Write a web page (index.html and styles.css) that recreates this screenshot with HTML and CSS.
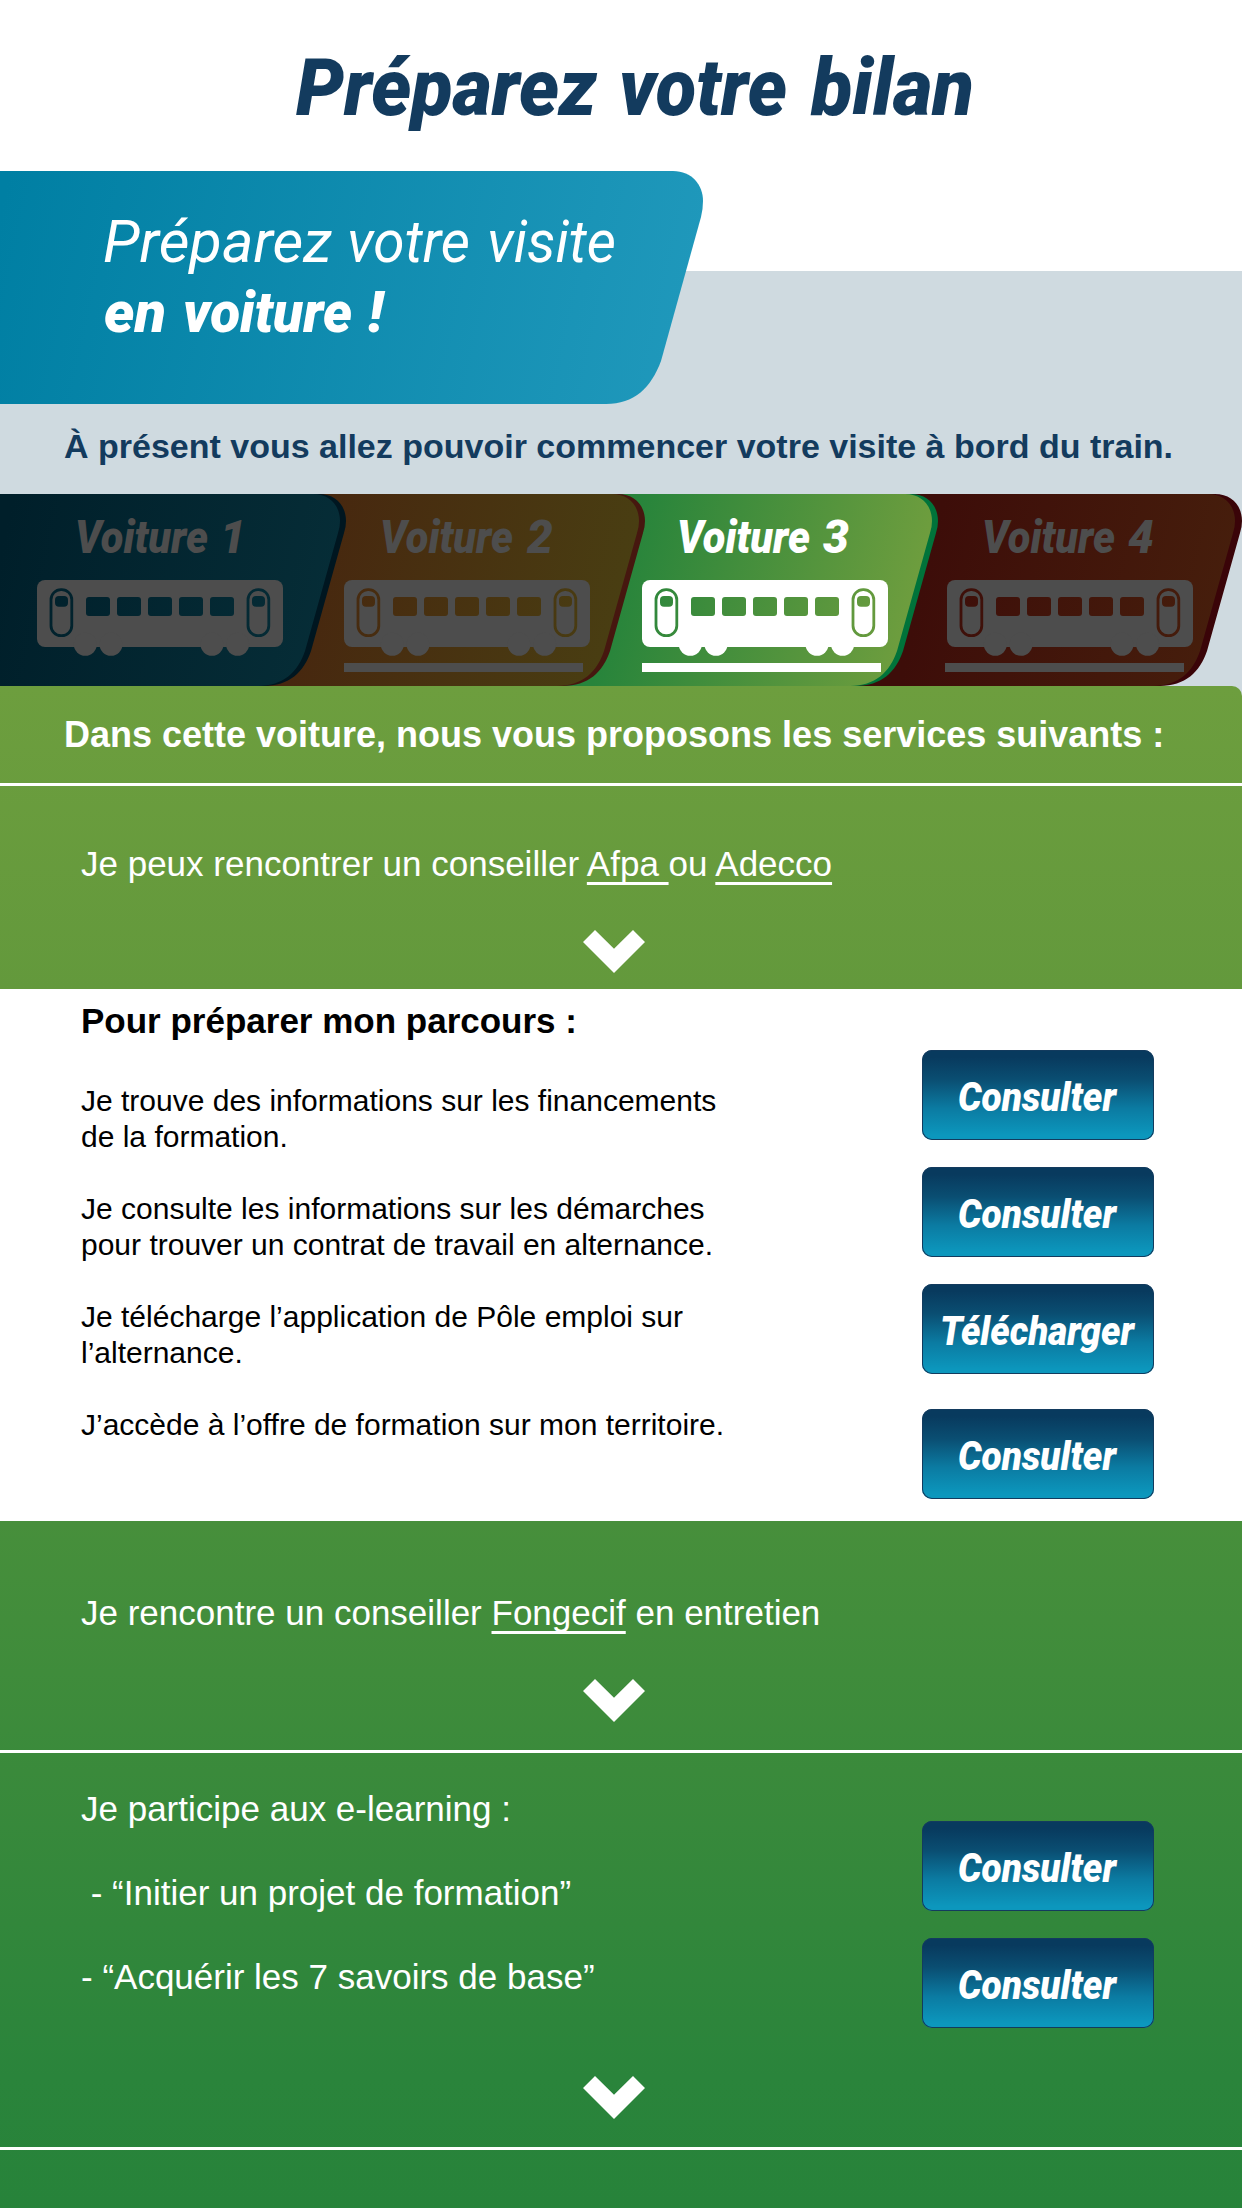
FILE: index.html
```html
<!DOCTYPE html>
<html lang="fr">
<head>
<meta charset="utf-8">
<title>Préparez votre bilan</title>
<link rel="stylesheet" href="styles.css">
</head>
<body>
<svg width="0" height="0" class="defs" aria-hidden="true">
  <defs>
    <mask id="openings" maskUnits="userSpaceOnUse" x="0" y="0" width="246" height="77">
      <rect width="246" height="77" fill="#fff"/>
      <g fill="#000">
        <rect x="49" y="17" width="24" height="19" rx="3"/>
        <rect x="80" y="17" width="24" height="19" rx="3"/>
        <rect x="111" y="17" width="24" height="19" rx="3"/>
        <rect x="142" y="17" width="24" height="19" rx="3"/>
        <rect x="173" y="17" width="24" height="19" rx="3"/>
        <rect x="18" y="16" width="13" height="10.7" rx="4"/>
        <rect x="215" y="16" width="13" height="10.7" rx="4"/>
      </g>
      <g fill="none" stroke="#000" stroke-width="2.8">
        <rect x="14" y="9.7" width="20.8" height="46" rx="10"/>
        <rect x="211" y="9.7" width="20.8" height="46" rx="10"/>
      </g>
    </mask>
    <g id="wagon">
      <g mask="url(#openings)">
        <rect width="246" height="67" rx="8"/>
        <circle cx="48.3" cy="64.3" r="11.5"/>
        <circle cx="74" cy="64.3" r="11.5"/>
        <circle cx="175" cy="64.3" r="11.5"/>
        <circle cx="200.6" cy="64.3" r="11.5"/>
      </g>
    </g>
    <path id="car" d="M-400 0H-27C-10 0 0 12 0 27Q0 33 -2 39L-35 157C-42 178 -57 192 -82 192H-400Z"/>
    <linearGradient id="g1" gradientUnits="userSpaceOnUse" x1="0" y1="60" x2="330" y2="130"><stop stop-color="#001f2a"/><stop offset="1" stop-color="#062d37"/></linearGradient>
    <linearGradient id="g2" gradientUnits="userSpaceOnUse" x1="310" y1="60" x2="620" y2="130"><stop stop-color="#47270f"/><stop offset="1" stop-color="#493e12"/></linearGradient>
    <linearGradient id="g3" gradientUnits="userSpaceOnUse" x1="620" y1="80" x2="900" y2="150"><stop stop-color="#27843b"/><stop offset="1" stop-color="#6d9d3e"/></linearGradient>
    <linearGradient id="g4" gradientUnits="userSpaceOnUse" x1="930" y1="60" x2="1220" y2="130"><stop stop-color="#3d0d09"/><stop offset="1" stop-color="#461e0c"/></linearGradient>
    <linearGradient id="gb" gradientUnits="userSpaceOnUse" x1="0" y1="40" x2="680" y2="190"><stop stop-color="#007fa3"/><stop offset="1" stop-color="#1f98bb"/></linearGradient>
  </defs>
</svg>

<header class="top">
  <h1 class="title">
    <svg width="1242" height="171"><text class="display" y="115" font-size="79"><tspan x="296" textLength="301" lengthAdjust="spacingAndGlyphs">Préparez</tspan> <tspan x="619" textLength="168" lengthAdjust="spacingAndGlyphs">votre</tspan> <tspan x="811" textLength="163" lengthAdjust="spacingAndGlyphs">bilan</tspan></text></svg>
  </h1>
  <h2 class="banner">
    <svg width="703" height="233">
      <path fill="url(#gb)" d="M0 0H673C692 0 703 14 703 30Q703 38 701 46L661 190C651 217 634 233 606 233H0Z"/>
      <text class="display light" y="91" font-size="59"><tspan x="103" textLength="229" lengthAdjust="spacingAndGlyphs">Préparez</tspan> <tspan x="347" textLength="123" lengthAdjust="spacingAndGlyphs">votre</tspan> <tspan x="487" textLength="129" lengthAdjust="spacingAndGlyphs">visite</tspan></text>
      <text class="display" y="161" font-size="58"><tspan x="104" textLength="62" lengthAdjust="spacingAndGlyphs">en</tspan> <tspan x="183" textLength="169" lengthAdjust="spacingAndGlyphs">voiture</tspan> <tspan x="368">!</tspan></text>
    </svg>
  </h2>
  <p class="intro">À présent vous allez pouvoir commencer votre visite à bord du train.</p>
</header>

<nav class="cars">
  <svg width="1242" height="192">
    <use href="#car" x="1242" fill="#3a0408"/>
    <path fill="url(#g4)" d="M835 0H1208C1225 0 1235 12 1235 27Q1235 33 1233 39L1200 157C1193 178 1178 192 1153 192H835Z"/>
    <use href="#car" x="938" fill="#00733a"/>
    <path fill="url(#g3)" d="M532 0H905C922 0 932 12 932 27Q932 33 930 39L897 157C890 178 875 192 850 192H532Z"/>
    <use href="#car" x="645" fill="#46170f"/>
    <path fill="url(#g2)" d="M239 0H612C629 0 639 12 639 27Q639 33 637 39L604 157C597 178 582 192 557 192H239Z"/>
    <use href="#car" x="346" fill="#001620"/>
    <path fill="url(#g1)" d="M0 0H313C330 0 340 12 340 27Q340 33 338 39L305 157C298 178 283 192 258 192H0Z"/>
    <g class="muted">
      <text class="display" y="59" font-size="46"><tspan x="75" textLength="133" lengthAdjust="spacingAndGlyphs">Voiture</tspan> <tspan x="220">1</tspan></text>
      <use href="#wagon" x="37" y="86"/>
      <text class="display" y="59" font-size="46"><tspan x="380" textLength="133" lengthAdjust="spacingAndGlyphs">Voiture</tspan> <tspan x="527">2</tspan></text>
      <use href="#wagon" x="344" y="86"/>
      <rect x="344" y="169" width="239" height="9"/>
      <text class="display" y="59" font-size="46"><tspan x="982" textLength="133" lengthAdjust="spacingAndGlyphs">Voiture</tspan> <tspan x="1128">4</tspan></text>
      <use href="#wagon" x="947" y="86"/>
      <rect x="945" y="169" width="239" height="9"/>
    </g>
    <g fill="#fff">
      <text class="display" y="59" font-size="46"><tspan x="677" textLength="133" lengthAdjust="spacingAndGlyphs">Voiture</tspan> <tspan x="823">3</tspan></text>
      <use href="#wagon" x="642" y="86"/>
      <rect x="642" y="169" width="239" height="9"/>
    </g>
  </svg>
</nav>

<main class="services">
  <h2 class="services-title">Dans cette voiture, nous vous proposons les services suivants :</h2>

  <section class="step step-first">
    <p class="lead">Je peux rencontrer un conseiller <a class="link">Afpa </a>ou <a class="link">Adecco</a></p>
    <svg class="chevron" viewBox="0 0 62 43"><path d="M12 0L31 18.8L50 0L62 12L31 43L0 12Z"/></svg>
  </section>

  <section class="panel">
    <div class="panel-text">
      <h3 class="panel-title">Pour préparer mon parcours :</h3>
      <p>Je trouve des informations sur les financements<br>de la formation.</p>
      <p>Je consulte les informations sur les démarches<br>pour trouver un contrat de travail en alternance.</p>
      <p>Je télécharge l’application de Pôle emploi sur<br>l’alternance.</p>
      <p>J’accède à l’offre de formation sur mon territoire.</p>
    </div>
    <div class="actions">
      <a class="button"><svg width="232" height="90"><text class="display" x="36" y="60.5" font-size="40" textLength="158" lengthAdjust="spacingAndGlyphs">Consulter</text></svg></a>
      <a class="button"><svg width="232" height="90"><text class="display" x="36" y="60.5" font-size="40" textLength="158" lengthAdjust="spacingAndGlyphs">Consulter</text></svg></a>
      <a class="button"><svg width="232" height="90"><text class="display" x="18" y="60.5" font-size="40" textLength="194" lengthAdjust="spacingAndGlyphs">Télécharger</text></svg></a>
      <a class="button button-apart"><svg width="232" height="90"><text class="display" x="36" y="60.5" font-size="40" textLength="158" lengthAdjust="spacingAndGlyphs">Consulter</text></svg></a>
    </div>
  </section>

  <section class="step step-meeting">
    <p class="lead">Je rencontre un conseiller <a class="link">Fongecif</a> en entretien</p>
    <svg class="chevron" viewBox="0 0 62 43"><path d="M12 0L31 18.8L50 0L62 12L31 43L0 12Z"/></svg>
  </section>

  <section class="step step-learning">
    <div class="learning">
      <div class="learning-text">
        <p>Je participe aux e-learning :</p>
        <p>&nbsp;- “Initier un projet de formation”</p>
        <p>- “Acquérir les 7 savoirs de base”</p>
      </div>
      <div class="actions">
        <a class="button"><svg width="232" height="90"><text class="display" x="36" y="60.5" font-size="40" textLength="158" lengthAdjust="spacingAndGlyphs">Consulter</text></svg></a>
        <a class="button"><svg width="232" height="90"><text class="display" x="36" y="60.5" font-size="40" textLength="158" lengthAdjust="spacingAndGlyphs">Consulter</text></svg></a>
      </div>
    </div>
    <svg class="chevron" viewBox="0 0 62 43"><path d="M12 0L31 18.8L50 0L62 12L31 43L0 12Z"/></svg>
  </section>
</main>
</body>
</html>
```

FILE: styles.css
```css
* { box-sizing: border-box; margin: 0; padding: 0; }

body {
  width: 1242px;
  height: 2208px;
  display: flex;
  flex-direction: column;
  overflow: hidden;
  font-family: "Liberation Sans", Arial, sans-serif;
  background: linear-gradient(#fff 271px, #cfdae0 271px);
}

svg { display: block; }
.defs { position: absolute; }

.display {
  font-family: Roboto, "Liberation Sans", sans-serif;
  font-style: italic;
  font-weight: 900;
}
.display.light { font-weight: 400; }

.title { fill: #133b5e; height: 171px; }
.banner { fill: #fff; height: 233px; }
.intro {
  height: 90px;
  padding-left: 64px;
  font-size: 34px;
  font-weight: 700;
  line-height: 84px;
  color: #133b5e;
  white-space: nowrap;
}

.cars { height: 192px; }
.muted { fill: #4d4d4d; }

.services {
  flex: 1;
  display: flex;
  flex-direction: column;
  color: #fff;
  border-top-right-radius: 10px;
  background: linear-gradient(#6d9e3e 0, #63993c 303px, #478f3b 835px, #2a843b 1390px, #27833a 1522px);
}
.services-title {
  height: 100px;
  padding-left: 64px;
  border-bottom: 3px solid #fff;
  font-size: 36px;
  line-height: 97px;
  white-space: nowrap;
}

.step { display: flex; flex-direction: column; }
.step-first { height: 203px; padding-top: 58px; }
.step-meeting { height: 232px; padding-top: 72px; border-bottom: 3px solid #fff; }
.step-learning { height: 397px; padding-top: 14px; border-bottom: 3px solid #fff; }

.lead {
  padding-left: 81px;
  margin-bottom: 46px;
  font-size: 35px;
  line-height: 40px;
  white-space: nowrap;
}
.link {
  text-decoration: underline;
  text-decoration-thickness: 2.5px;
  text-underline-offset: 6px;
  text-decoration-skip-ink: none;
}
.chevron { width: 62px; height: 43px; margin-left: 583px; fill: #fff; }

.panel {
  display: flex;
  justify-content: space-between;
  height: 532px;
  padding: 12px 88px 0 81px;
  background: #fff;
  color: #000;
}
.panel-text {
  display: flex;
  flex-direction: column;
  gap: 36px;
  font-size: 30px;
  line-height: 36px;
  white-space: nowrap;
}
.panel-title { margin-bottom: 6px; font-size: 35px; line-height: 40px; }

.actions { display: flex; flex-direction: column; gap: 27px; }
.panel .actions { padding-top: 49px; }
.button {
  display: block;
  width: 232px;
  height: 90px;
  border-radius: 10px;
  box-shadow: inset 0 0 0 1px #133b5e;
  background: linear-gradient(#083a5e 8%, #0a4e72 33%, #0b7ba2 65%, #0c97bd 95%);
  fill: #fff;
}
.button-apart { margin-top: 8px; }

.learning {
  display: flex;
  justify-content: space-between;
  height: 252px;
  margin-bottom: 57px;
  padding: 0 88px 0 81px;
}
.learning-text { font-size: 35px; line-height: 84px; white-space: nowrap; }
.learning .actions { padding-top: 54px; }
```
